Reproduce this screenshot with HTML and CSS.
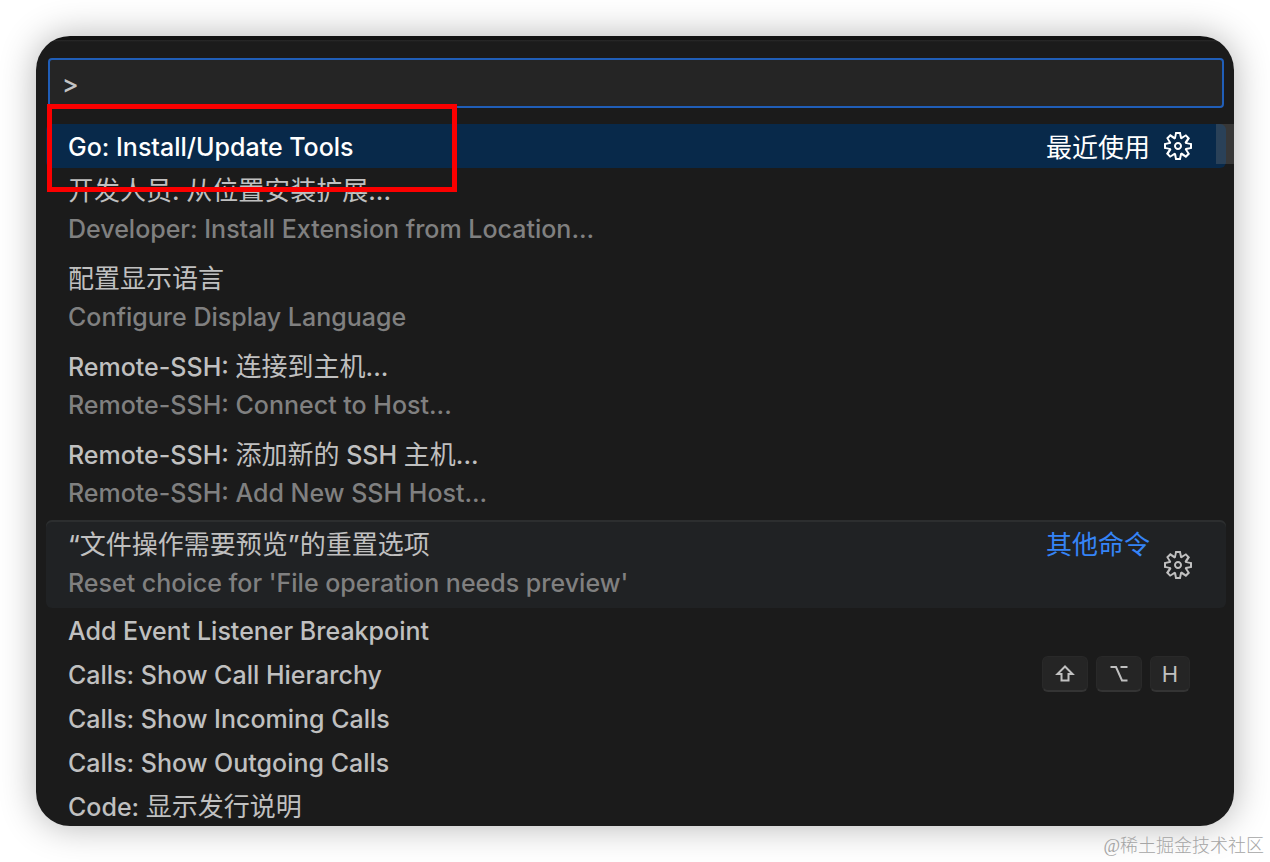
FILE: index.html
```html
<!DOCTYPE html>
<html lang="zh-CN">
<head>
    <meta charset="UTF-8">
    <meta name="viewport" content="width=device-width, initial-scale=1.0">
    <title>命令面板</title>
    <link rel="stylesheet" href="styles.css">
</head>

<body>
    <!-- Icons -->
    <svg class="sprite" aria-hidden="true">
        <symbol id="gear" viewBox="0 0 16 16">
            <path fill-rule="evenodd" clip-rule="evenodd" d="M9.1 4.4L8.6 2H7.4l-.5 2.4-.7.3-2-1.3-.9.8 1.3 2-.2.7-2.4.5v1.2l2.4.5.3.8-1.3 2 .8.8 2-1.3.8.3.4 2.3h1.2l.5-2.4.8-.3 2 1.3.8-.8-1.3-2 .3-.8 2.3-.4V7.4l-2.4-.5-.3-.8 1.3-2-.8-.8-2 1.3-.7-.2zM9.4 1l.5 2.4L12 2.1l2 2-1.4 2.1 2.4.4v2.8l-2.4.5L14 12l-2 2-2.1-1.4-.5 2.4H6.6l-.5-2.4L4 13.9l-2-2 1.4-2.1L1 9.4V6.6l2.4-.5L2.1 4l2-2 2.1 1.4.4-2.4h2.8zm.6 7c0 1.1-.9 2-2 2s-2-.9-2-2 .9-2 2-2 2 .9 2 2zM8 9c.6 0 1-.4 1-1s-.4-1-1-1-1 .4-1 1 .4 1 1 1z"/>
        </symbol>
    </svg>

    <main class="palette">
        <!-- Search box -->
        <div class="search">
            <input class="search-input" type="text" value="&gt;" aria-label="命令">
        </div>

        <!-- Commands -->
        <ul class="commands">
            <li class="command selected">
                <div class="command-text">
                    <p class="label">Go: Install/Update Tools</p>
                </div>
                <span class="group">最近使用</span>
                <button class="gear" aria-label="配置键绑定"><svg><use href="#gear"/></svg></button>
            </li>
            <li class="command">
                <div class="command-text">
                    <p class="label"><span class="zh">开发人员</span>: <span class="zh">从位置安装扩展</span>...</p>
                    <p class="detail">Developer: Install Extension from Location...</p>
                </div>
            </li>
            <li class="command">
                <div class="command-text">
                    <p class="label"><span class="zh">配置显示语言</span></p>
                    <p class="detail">Configure Display Language</p>
                </div>
            </li>
            <li class="command">
                <div class="command-text">
                    <p class="label">Remote-SSH: <span class="zh">连接到主机</span>...</p>
                    <p class="detail">Remote-SSH: Connect to Host...</p>
                </div>
            </li>
            <li class="command">
                <div class="command-text">
                    <p class="label">Remote-SSH: <span class="zh">添加新的</span> SSH <span class="zh">主机</span>...</p>
                    <p class="detail">Remote-SSH: Add New SSH Host...</p>
                </div>
            </li>
            <li class="command hovered">
                <div class="command-text">
                    <p class="label">“<span class="zh">文件操作需要预览</span>”<span class="zh">的重置选项</span></p>
                    <p class="detail">Reset choice for 'File operation needs preview'</p>
                </div>
                <span class="group">其他命令</span>
                <button class="gear" aria-label="配置键绑定"><svg><use href="#gear"/></svg></button>
            </li>
            <li class="command">
                <div class="command-text">
                    <p class="label">Add Event Listener Breakpoint</p>
                </div>
            </li>
            <li class="command">
                <div class="command-text">
                    <p class="label">Calls: Show Call Hierarchy</p>
                </div>
                <div class="keys">
                    <kbd class="key" aria-label="Shift"><svg viewBox="0 0 20 20"><path d="M10 2.5L2.5 10H6.5V16.5H13.5V10H17.5Z"/></svg></kbd>
                    <kbd class="key" aria-label="Option"><svg viewBox="0 0 20 20"><path d="M1.5 3H7L13 16.5H18.5M11.5 3H18.5"/></svg></kbd>
                    <kbd class="key key-letter">H</kbd>
                </div>
            </li>
            <li class="command">
                <div class="command-text">
                    <p class="label">Calls: Show Incoming Calls</p>
                </div>
            </li>
            <li class="command">
                <div class="command-text">
                    <p class="label">Calls: Show Outgoing Calls</p>
                </div>
            </li>
            <li class="command">
                <div class="command-text">
                    <p class="label">Code: <span class="zh">显示发行说明</span></p>
                </div>
            </li>
        </ul>

        <div class="scrollbar"></div>
        <!-- Red frame over the first command -->
        <div class="marker"></div>
    </main>

    <p class="watermark">@稀土掘金技术社区</p>
</body>
</html>
```

FILE: styles.css
```css
/* General */
* {
    box-sizing: border-box;
}

body {
    margin: 0;
    height: 100vh;
    padding: 36px;
    background: #fff;
    font-family: Inter, "Noto Sans CJK SC", sans-serif;
    font-size: 25px;
    font-weight: 500;
    line-height: 38px;
    color: #c0c0c0;
    overflow: hidden;
}

p {
    margin: 0;
}

.sprite {
    display: none;
}

/* Palette */
.palette {
    position: relative;
    height: 100%;
    padding-top: 22px;
    background: linear-gradient(#121212 4px, #292929 4px, #1b1b1b 6px);
    border-radius: 34px;
    box-shadow: 0 0 36px rgba(0, 0, 0, 0.3);
    overflow: hidden;
}

/* Search box */
.search {
    padding: 0 10px 16px 12px;
}

.search-input {
    display: block;
    width: 100%;
    height: 50px;
    padding: 2px 12px 0;
    background: #252525;
    border: 2px solid #205eb8;
    border-radius: 4px;
    outline: none;
    font: inherit;
    color: #c3c3c3;
}

/* Commands */
.commands {
    margin: 0;
    padding: 0 8px 0 10px;
    list-style: none;
}

.command {
    display: flex;
    align-items: center;
    padding: 4px 32px 2px 22px;
    border-radius: 6px;
}

.command-text {
    flex: 1;
}

.label,
.detail {
    white-space: nowrap;
}

.detail {
    padding-bottom: 6px;
    color: #808080;
}

.zh,
.group {
    font-family: "Noto Sans CJK SC", sans-serif;
    font-size: 26px;
    font-weight: 400;
    line-height: 1;
}

.group {
    line-height: 34px;
}

.selected {
    background: #08294a;
    color: #fff;
}

.selected .group,
.selected .gear {
    margin-bottom: 2px;
}

.hovered {
    padding-top: 6px;
    padding-bottom: 0;
    background: #202224;
    box-shadow: inset 0 2px #2c2e2f;
}

.hovered .group {
    align-self: flex-start;
    color: #3584f7;
}

.hovered .gear {
    align-self: flex-start;
    margin-top: 23px;
}

.gear {
    width: 32px;
    height: 32px;
    margin-left: 12px;
    padding: 0;
    background: none;
    border: none;
    color: inherit;
    cursor: pointer;
}

.gear svg {
    display: block;
    width: 32px;
    height: 32px;
    fill: currentColor;
}

/* Key bindings */
.keys {
    display: flex;
    gap: 8px;
    padding: 0 4px 2px 0;
}

.key {
    display: flex;
    align-items: center;
    justify-content: center;
    width: 46px;
    height: 36px;
    background: #252525;
    border: 1px solid #292929;
    border-bottom: 2px solid #343434;
    border-radius: 6px;
    font-family: inherit;
    font-size: 22px;
    font-weight: 400;
}

.key-letter {
    width: 40px;
}

.key svg {
    width: 20px;
    height: 20px;
    fill: none;
    stroke: currentColor;
    stroke-width: 2;
}

/* Overlays */
.scrollbar {
    position: absolute;
    top: 88px;
    right: 0;
    width: 18px;
    height: 40px;
    background: rgba(121, 121, 121, 0.3);
}

.marker {
    position: absolute;
    top: 68px;
    left: 11px;
    width: 410px;
    height: 88px;
    border: 5px solid #fb0000;
}

.watermark {
    position: absolute;
    right: 6px;
    bottom: 1px;
    font-family: "Liberation Serif", "Noto Sans CJK SC", serif;
    font-size: 18px;
    font-weight: 300;
    line-height: 30px;
    color: #a5a5a5;
}
```
